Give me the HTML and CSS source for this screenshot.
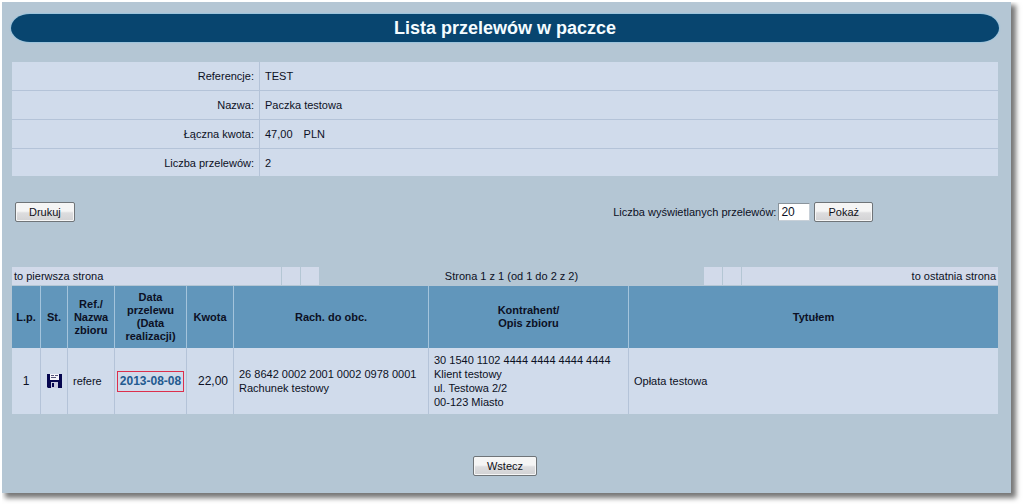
FILE: index.html
```html
<!DOCTYPE html>
<html lang="pl">
<head>
  <meta charset="UTF-8">
  <meta name="viewport" content="width=device-width, initial-scale=1.0">
  <title>Lista przelewów w paczce</title>
  <link rel="stylesheet" href="styles.css">
</head>
<body>

  <main class="panel">
    <h1 class="title">Lista przelewów w paczce</h1>

    <table class="info">
      <tr><th scope="row">Referencje:</th><td>TEST</td></tr>
      <tr><th scope="row">Nazwa:</th><td>Paczka testowa</td></tr>
      <tr><th scope="row">Łączna kwota:</th><td>47,00 <span class="currency">PLN</span></td></tr>
      <tr><th scope="row">Liczba przelewów:</th><td>2</td></tr>
    </table>

    <div class="toolbar">
      <button type="button" class="btn">Drukuj</button>
      <form class="page-size">
        <label for="count">Liczba wyświetlanych przelewów:</label>
        <input type="text" id="count" value="20">
        <button type="button" class="btn">Pokaż</button>
      </form>
    </div>

    <div class="pager">
      <div class="pager-side">
        <span class="pager-end">to pierwsza strona</span>
        <span class="pager-step"></span>
        <span class="pager-step"></span>
      </div>
      <div class="pager-info">Strona 1 z 1 (od 1 do 2 z 2)</div>
      <div class="pager-side">
        <span class="pager-step"></span>
        <span class="pager-step"></span>
        <span class="pager-end last">to ostatnia strona</span>
      </div>
    </div>

    <table class="list">
      <colgroup>
        <col class="col-no">
        <col class="col-status">
        <col class="col-ref">
        <col class="col-date">
        <col class="col-amount">
        <col class="col-account">
        <col class="col-party">
        <col>
      </colgroup>
      <thead>
        <tr>
          <th>L.p.</th>
          <th>St.</th>
          <th>Ref./<br>Nazwa<br>zbioru</th>
          <th>Data<br>przelewu<br>(Data<br>realizacji)</th>
          <th>Kwota</th>
          <th>Rach. do obc.</th>
          <th>Kontrahent/<br>Opis zbioru</th>
          <th>Tytułem</th>
        </tr>
      </thead>
      <tbody>
        <tr>
          <td class="center">1</td>
          <td class="status">
            <svg class="disk" viewBox="0 0 15 14" role="img" aria-label="Zapisany">
              <path fill="#06064f" d="M0 0h15v14H1L0 13z"/>
              <path fill="#f4f4fa" d="M3 0h9v6H3z"/>
              <path fill="#55557a" d="M4 1h3v1H4zM8 1h3v1H8zM4 3h5v1H4z"/>
              <path fill="#c9cbe0" d="M4 8h7v6H4z"/>
              <path fill="#06064f" d="M5 9h2v4H5z"/>
            </svg>
          </td>
          <td>refere</td>
          <td class="date"><a href="#">2013-08-08</a></td>
          <td class="amount">22,00</td>
          <td>26 8642 0002 2001 0002 0978 0001<br>Rachunek testowy</td>
          <td>30 1540 1102 4444 4444 4444 4444<br>Klient testowy<br>ul. Testowa 2/2<br>00-123 Miasto</td>
          <td>Opłata testowa</td>
        </tr>
      </tbody>
    </table>

    <div class="footer">
      <button type="button" class="btn">Wstecz</button>
    </div>
  </main>

</body>
</html>
```

FILE: styles.css
```css
* {
  box-sizing: border-box;
}

body {
  margin: 0;
  padding: 2px 13px 11px 2px;
  background: #fff;
  color: #0c1024;
  font-family: "Liberation Sans", Arial, sans-serif;
  font-size: 11px;
  line-height: 14px;
}

.panel {
  padding: 12px 13px 17px 10px;
  background: #b4c6d4;
  box-shadow: 4px 4px 5px 1px #777;
  clip-path: inset(0 -13px -11px 0);
}

.title {
  margin: 0 -1px 20px;
  border-radius: 19px / 14px;
  background: #08456f;
  box-shadow: 0 0 1px 1px #9cc4dc;
  color: #f4fcff;
  font-size: 18px;
  line-height: 28px;
  text-align: center;
}

table {
  width: 100%;
  border-collapse: separate;
  border-spacing: 0;
}

/* batch summary */
.info {
  table-layout: fixed;
}

.info th,
.info td {
  height: 29px;
  padding: 0 5px;
  border-bottom: 1px solid #b4c3d8;
  background: #d0dbeb;
}

.info tr:last-child > * {
  height: 27px;
  border-bottom: none;
}

.info th {
  width: 248px;
  border-right: 1px solid #b4c3d8;
  font-weight: normal;
  text-align: right;
}

.currency {
  margin-left: 8px;
}

.toolbar {
  display: flex;
  justify-content: space-between;
  align-items: center;
  margin: 26px 0 45px;
  padding: 0 125px 0 3px;
}

.page-size {
  display: flex;
  align-items: center;
}

.page-size input {
  width: 32px;
  height: 18px;
  margin: 0 4px 0 2px;
  padding: 0 2px;
  border: 1px solid #c8d0d8;
  border-top-color: #8a949c;
  border-left-color: #8a949c;
  background: #fff;
  color: #0c1024;
  font: inherit;
  font-size: 12px;
}

.btn {
  height: 20px;
  padding: 0 13px;
  border: 1px solid #6f7478;
  border-radius: 2px;
  background: linear-gradient(#f5f5f5 45%, #dddddf 55%, #d2d2d4);
  box-shadow: inset 0 0 0 1px #f6f6f6;
  color: #101018;
  font: inherit;
}

/* page navigation */
.pager {
  display: flex;
  justify-content: space-between;
  margin-bottom: 1px;
}

.pager-side {
  display: flex;
  gap: 1px;
}

.pager-side span {
  height: 18px;
  background: #d2daea;
  line-height: 18px;
}

.pager-end {
  width: 269px;
  padding: 0 2px;
}

.pager-end.last {
  width: 256px;
  text-align: right;
}

.pager-step {
  width: 18px;
}

.pager-info {
  line-height: 18px;
}

/* transfers */
.list {
  table-layout: fixed;
}

.col-no { width: 29px; }
.col-status { width: 27px; }
.col-ref { width: 47px; }
.col-date { width: 72px; }
.col-amount { width: 47px; }
.col-account { width: 195px; }
.col-party { width: 200px; }

.list th {
  height: 62px;
  padding: 0;
  border-right: 1px solid #a4c4dc;
  background: #6196bb;
  line-height: 13px;
}

.list td {
  height: 66px;
  padding: 0 0 0 5px;
  border-right: 1px solid #b4c3d8;
  background: #d0dbeb;
  white-space: nowrap;
}

.list th:last-child,
.list td:last-child {
  border-right: none;
}

.list .center,
.list .status,
.list .date {
  padding: 0;
  text-align: center;
}

.list .amount {
  padding: 0 5px 0 0;
  text-align: right;
}

.disk {
  display: block;
  width: 15px;
  height: 14px;
  margin: 0 auto;
}

.date a {
  display: block;
  margin: 0 2px;
  border: 1px solid #dc2f4c;
  color: #235a90;
  font-size: 12px;
  font-weight: bold;
  line-height: 19px;
  text-decoration: none;
}

.list .center,
.list .amount {
  font-size: 12px;
}

.footer {
  margin-top: 42px;
  text-align: center;
}
```
